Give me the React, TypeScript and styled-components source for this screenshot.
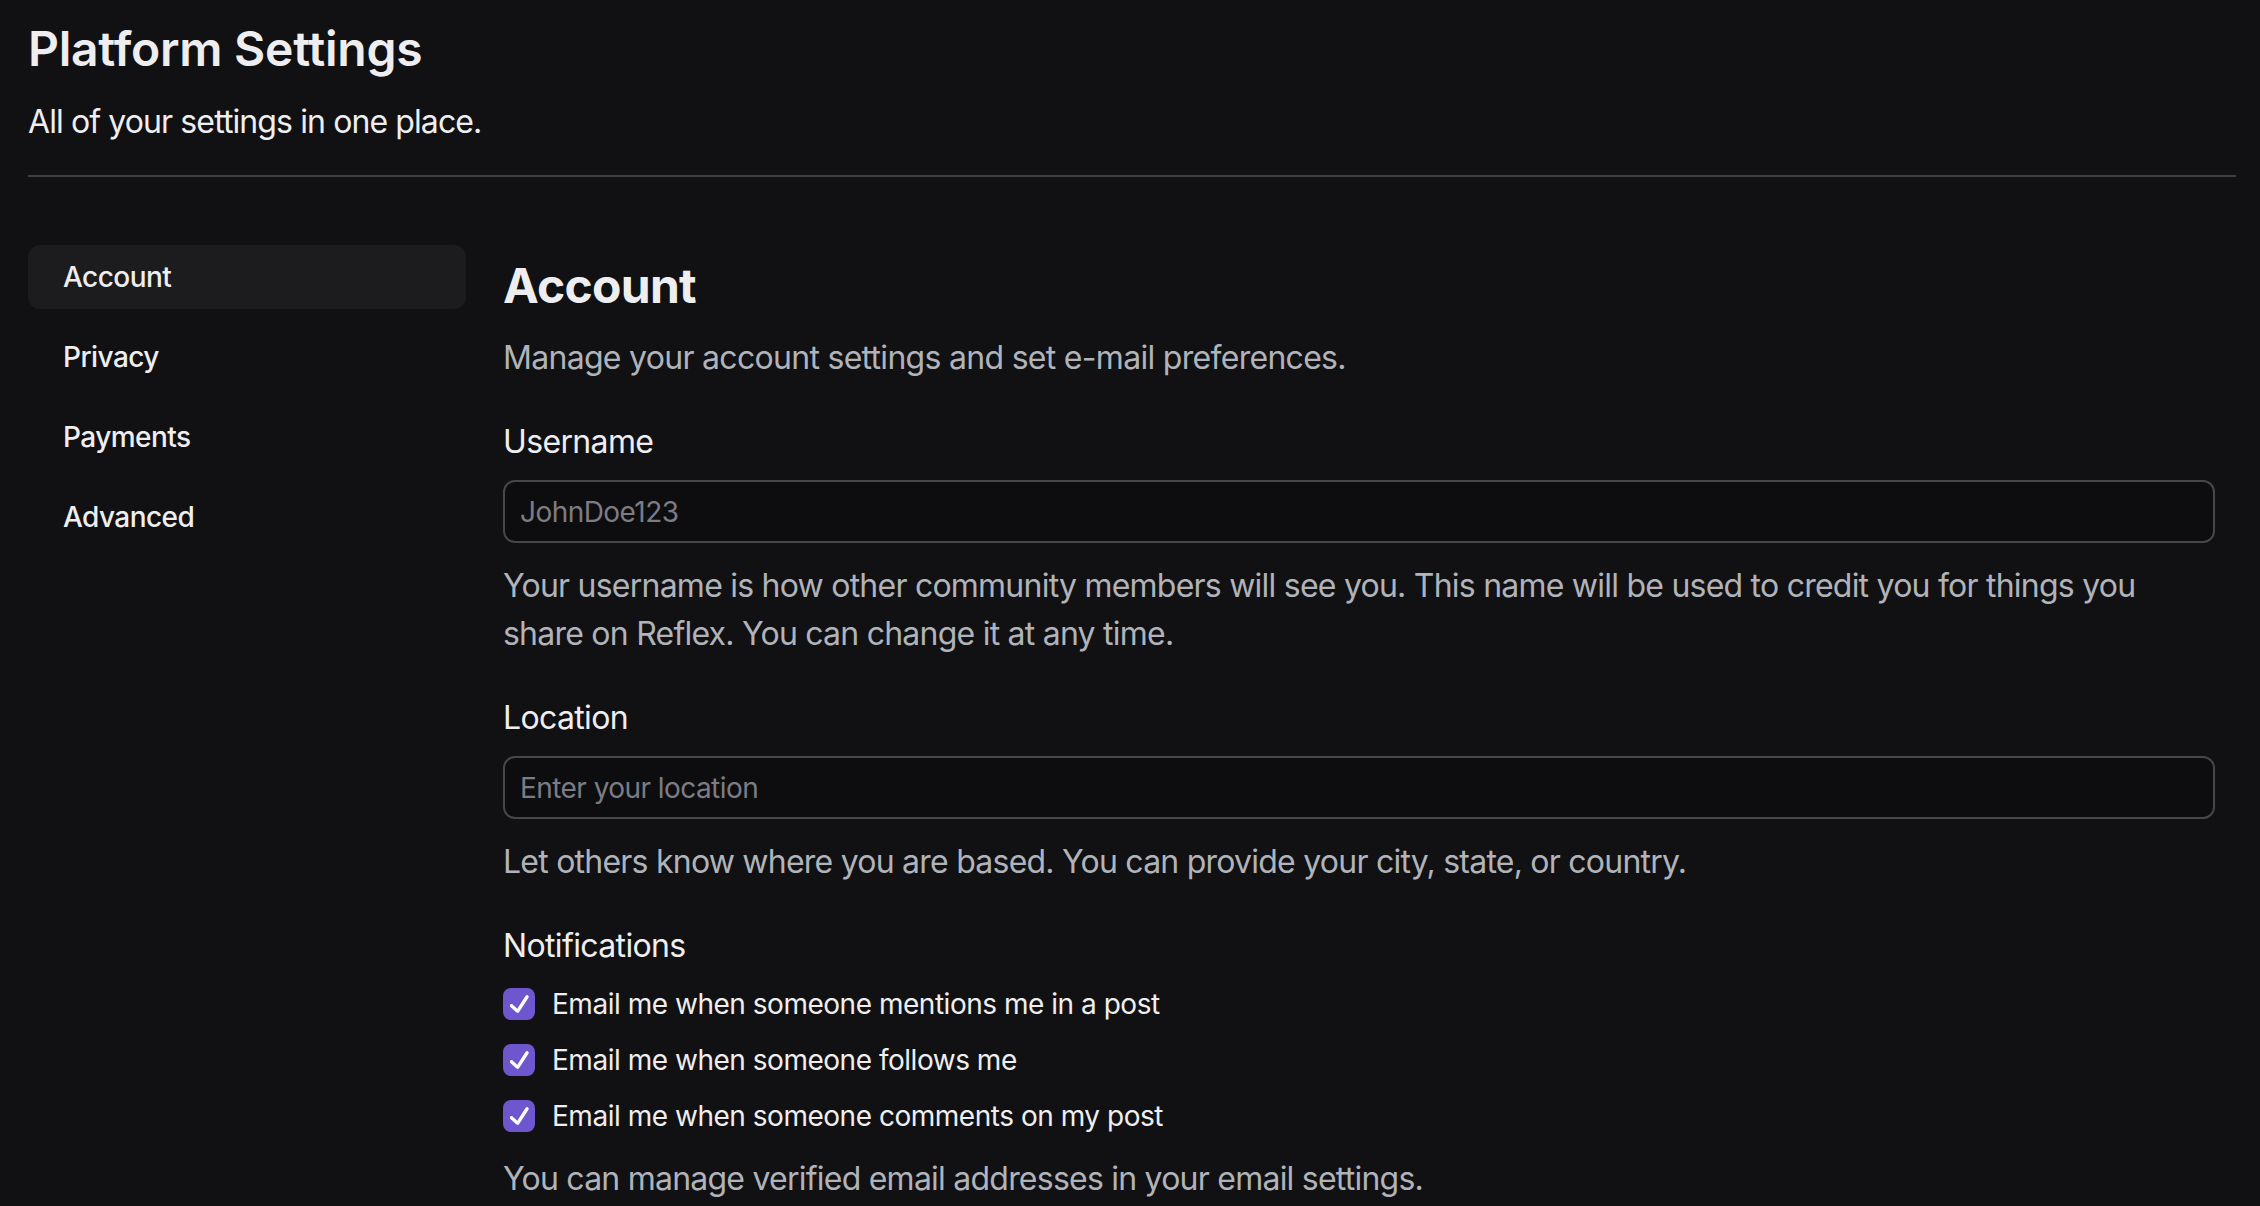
import styled, { createGlobalStyle } from "styled-components";

const GlobalStyle = createGlobalStyle`
  html, body {
    margin: 0;
    padding: 0;
    background: #111113;
  }
  body {
    font-family: Inter, "Noto Sans", sans-serif;
    color: #eeeef0;
  }
  * {
    box-sizing: border-box;
  }
`;

const Page = styled.div`
  padding: 21px 24px 40px 28px;
`;

const Header = styled.header`
  display: flex;
  flex-direction: column;
  gap: 21px;
  padding-bottom: 29px;
  border-bottom: 2px solid #404046;
`;

const Title = styled.h1`
  margin: 0;
  font-size: 48px;
  line-height: 56px;
  font-weight: 600;
  letter-spacing: -0.005em;
`;

const Subtitle = styled.p`
  margin: 0;
  font-size: 32px;
  line-height: 48px;
  font-weight: 400;
  letter-spacing: -0.028em;
  color: #eeeef0;
`;

const Body = styled.div`
  display: flex;
  gap: 37px;
  padding-top: 68px;
  padding-right: 21px;
`;

const Sidebar = styled.nav`
  width: 438px;
  flex-shrink: 0;
  display: flex;
  flex-direction: column;
  gap: 16px;
`;

const NavItem = styled.div<{ $active?: boolean }>`
  height: 64px;
  display: flex;
  align-items: center;
  padding: 0 35px;
  border-radius: 12px;
  font-size: 28px;
  font-weight: 500;
  letter-spacing: -0.02em;
  color: #eeeef0;
  background: ${({ $active }) => ($active ? "#1c1c1f" : "transparent")};
`;

const Main = styled.main`
  flex: 1;
  display: flex;
  flex-direction: column;
  padding-top: 3px;
`;

const SectionTitle = styled.h2`
  margin: 0;
  font-size: 48px;
  line-height: 76px;
  font-weight: 700;
  letter-spacing: -0.015em;
`;

const Description = styled.p`
  margin: 10px 0 0;
  font-size: 32px;
  line-height: 48px;
  letter-spacing: -0.022em;
  color: #b0b4ba;
`;

const Field = styled.div`
  display: flex;
  flex-direction: column;
  gap: 14px;
  margin-top: 36px;
`;

const Label = styled.label`
  font-size: 32px;
  line-height: 48px;
  font-weight: 400;
  letter-spacing: -0.02em;
  color: #eeeef0;
`;

const Input = styled.input`
  height: 63px;
  width: 100%;
  padding: 0 15px;
  font-family: inherit;
  font-size: 28px;
  letter-spacing: -0.02em;
  color: #eeeef0;
  background: #0d0d0f;
  border: 2px solid #46464c;
  border-radius: 12px;
  outline: none;

  &::placeholder {
    color: #7c7c84;
  }
`;

const Help = styled.p`
  margin: 5px 0 0;
  font-size: 32px;
  line-height: 48px;
  letter-spacing: -0.024em;
  color: #b0b4ba;
`;

const CheckList = styled.div`
  display: flex;
  flex-direction: column;
  gap: 16px;
`;

const CheckRow = styled.label`
  display: flex;
  align-items: center;
  gap: 17px;
  height: 40px;
  font-size: 28px;
  letter-spacing: -0.017em;
  color: #eeeef0;
`;

const CheckBox = styled.span`
  width: 32px;
  height: 32px;
  flex-shrink: 0;
  border-radius: 8px;
  background: #6e56cf;
  display: flex;
  align-items: center;
  justify-content: center;
`;

const Check = () => (
  <svg width="20" height="20" viewBox="0 0 9 9" fill="none">
    <path
      d="M8.53547 0.62293C8.88226 0.849446 8.97976 1.3142 8.75325 1.66099L4.5083 8.1599C4.38833 8.34356 4.19397 8.4655 3.9764 8.49358C3.75883 8.52167 3.53987 8.45309 3.3772 8.30591L0.616113 5.80777C0.308959 5.52987 0.285246 5.05559 0.563148 4.74844C0.84105 4.44128 1.31533 4.41757 1.62249 4.69547L3.73256 6.60459L7.49741 0.840706C7.72393 0.493916 8.18868 0.396414 8.53547 0.62293Z"
      fill="#ffffff"
    />
  </svg>
);

const navItems = ["Account", "Privacy", "Payments", "Advanced"];

const notifications = [
  "Email me when someone mentions me in a post",
  "Email me when someone follows me",
  "Email me when someone comments on my post",
];

export default function App() {
  return (
    <>
      <GlobalStyle />
      <Page>
        <Header>
          <Title>Platform Settings</Title>
          <Subtitle>All of your settings in one place.</Subtitle>
        </Header>
        <Body>
          <Sidebar>
            {navItems.map((item) => (
              <NavItem key={item} $active={item === "Account"}>
                {item}
              </NavItem>
            ))}
          </Sidebar>
          <Main>
            <SectionTitle>Account</SectionTitle>
            <Description>
              Manage your account settings and set e-mail preferences.
            </Description>

            <Field>
              <Label>Username</Label>
              <Input placeholder="JohnDoe123" />
              <Help>
                Your username is how other community members will see you. This
                name will be used to credit you for things you share on Reflex.
                You can change it at any time.
              </Help>
            </Field>

            <Field>
              <Label>Location</Label>
              <Input placeholder="Enter your location" />
              <Help>
                Let others know where you are based. You can provide your city,
                state, or country.
              </Help>
            </Field>

            <Field>
              <Label>Notifications</Label>
              <CheckList>
                {notifications.map((n) => (
                  <CheckRow key={n}>
                    <CheckBox>
                      <Check />
                    </CheckBox>
                    {n}
                  </CheckRow>
                ))}
              </CheckList>
              <Help>
                You can manage verified email addresses in your email settings.
              </Help>
            </Field>
          </Main>
        </Body>
      </Page>
    </>
  );
}
